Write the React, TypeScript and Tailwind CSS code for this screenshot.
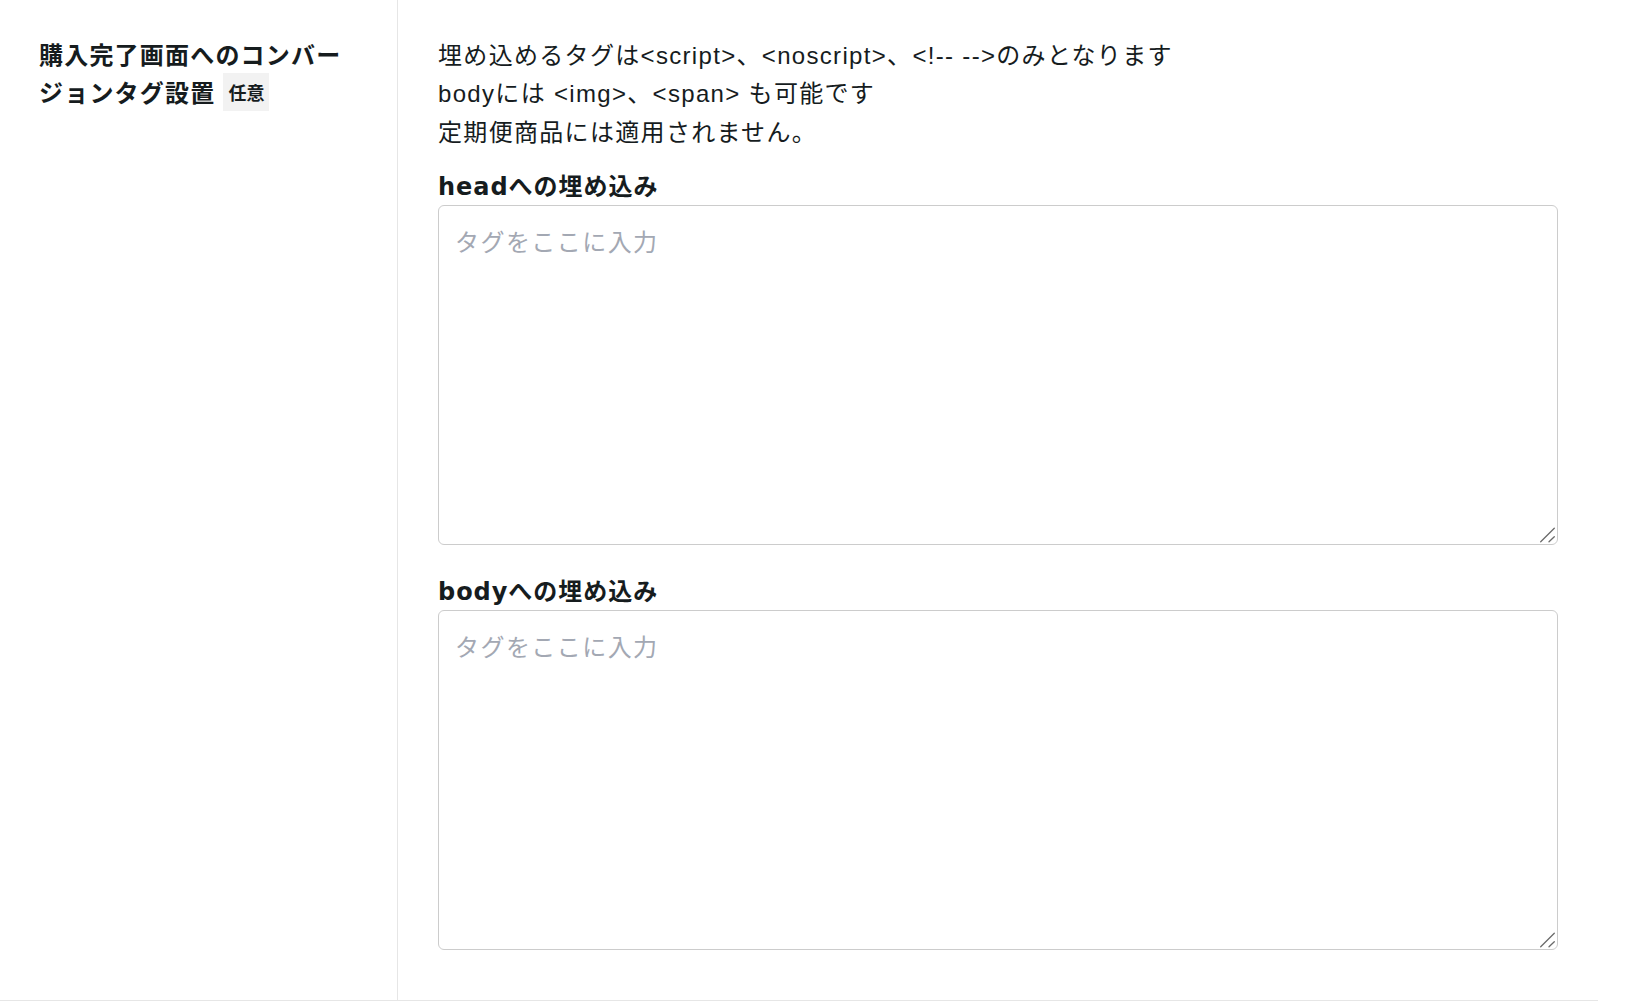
import React from "react";

const bodyFont = { fontFamily: '"Liberation Sans", "Noto Sans CJK JP", sans-serif' };
const headFont = { fontFamily: '"DejaVu Sans", "Noto Sans CJK JP", sans-serif' };
const cjkFont = { fontFamily: '"Noto Sans CJK JP", "Noto Sans", sans-serif' };

function Handle() {
  return (
    <svg
      className="absolute right-0 bottom-0 pointer-events-none"
      width="20"
      height="20"
      viewBox="0 0 20 20"
    >
      <line x1="2.7" y1="16.7" x2="16.3" y2="3.3" stroke="#6b6b6b" strokeWidth="1.3" strokeLinecap="round" />
      <line x1="11" y1="16.7" x2="16.3" y2="11.7" stroke="#6b6b6b" strokeWidth="1.3" strokeLinecap="round" />
    </svg>
  );
}

function TagArea() {
  return (
    <div className="relative">
      <textarea
        placeholder="タグをここに入力"
        className="block w-full h-[340px] border border-[#cccccc] rounded-[6px] p-4 text-[24px] leading-[1.6] tracking-[0.06em] text-[#161c1e] placeholder:text-[#a3a8b3] outline-none resize-none"
        style={cjkFont}
      />
      <Handle />
    </div>
  );
}

export default function App() {
  return (
    <div style={cjkFont} className="bg-white w-[1650px] h-[1002px]">
      <div className="w-[1598px] flex border-b border-[#e6e6e6] text-[#161c1e]">
        <div className="w-[398px] shrink-0 border-r border-[#e6e6e6] pl-[39px] pr-[40px] pt-[35px]">
          <div className="text-[24px] leading-[1.6] font-bold tracking-[0.05em]">
            購入完了画面へのコンバージョンタグ設置
            <span className="inline-block ml-[8px] px-[5px] bg-[#f2f2f2] text-[18px] leading-[38px] font-bold align-top tracking-normal">
              任意
            </span>
          </div>
        </div>
        <div className="flex-1 pl-[40px] pr-[40px] pt-[37px] pb-[50px]">
          <div className="text-[24px] leading-[1.6] tracking-[0.055em]" style={bodyFont}>
            <p>埋め込めるタグは&lt;script&gt;、&lt;noscript&gt;、&lt;!-- --&gt;のみとなります</p>
            <p>bodyには &lt;img&gt;、&lt;span&gt; も可能です</p>
            <p>定期便商品には適用されません。</p>
          </div>
          <div className="mt-[17px] text-[24px] leading-[36px] font-bold tracking-[0.04em]" style={headFont}>
            headへの埋め込み
          </div>
          <TagArea />
          <div className="mt-[29px] text-[24px] leading-[36px] font-bold tracking-[0.04em]" style={headFont}>
            bodyへの埋め込み
          </div>
          <TagArea />
        </div>
      </div>
    </div>
  );
}
